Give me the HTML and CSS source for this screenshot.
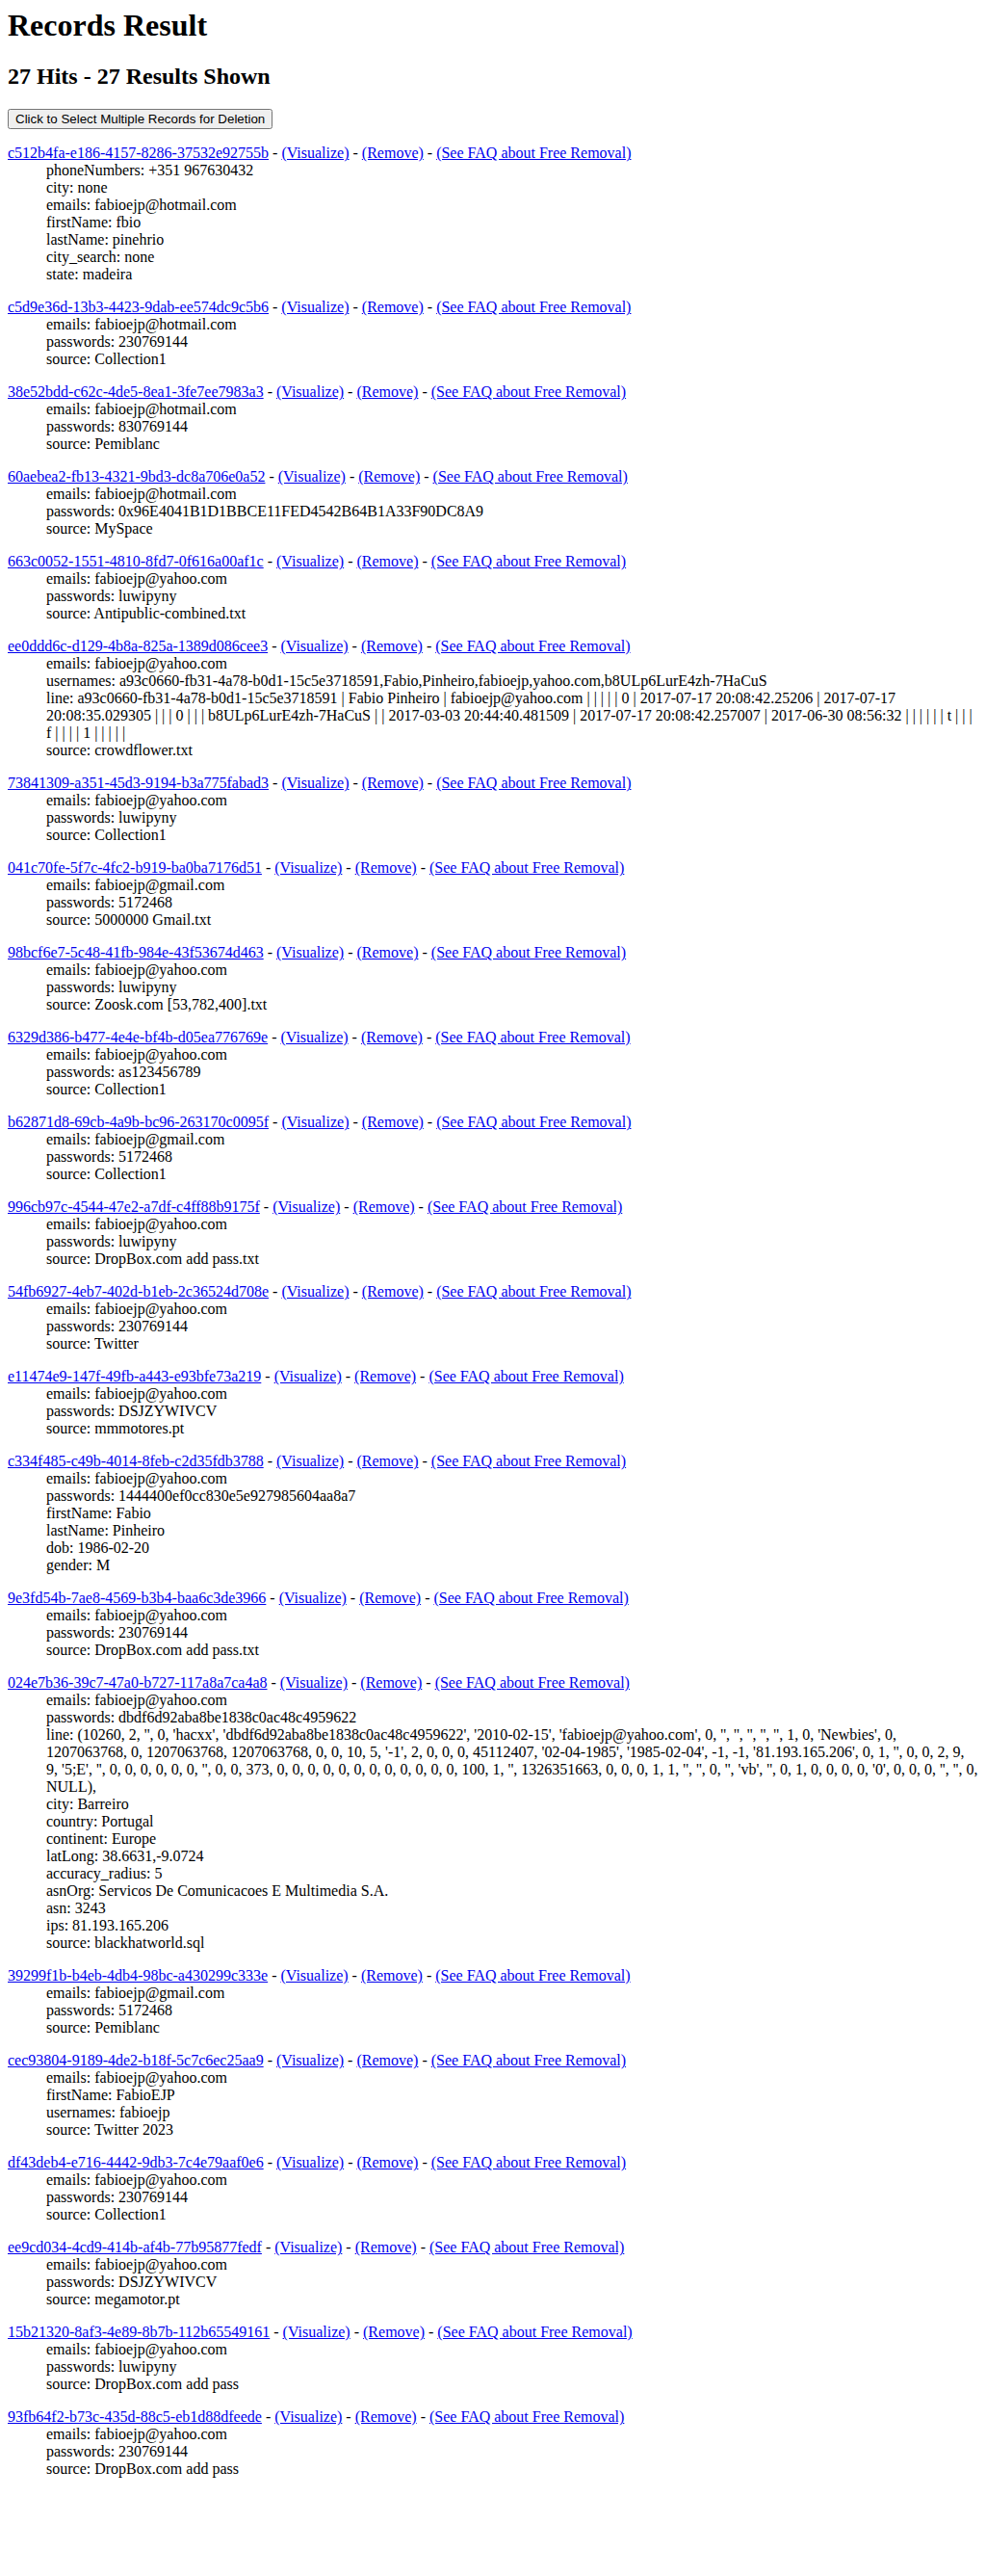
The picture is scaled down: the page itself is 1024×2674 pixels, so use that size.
FILE: index.html
```html
<!DOCTYPE html>
<html>
<head>
<meta charset="utf-8">
<title>Records Result</title>
<link rel="stylesheet" href="styles.css">
</head>
<body>
<h1 class="title">Records Result</h1>
<h2 class="hits">27 Hits - 27 Results Shown</h2>
<form class="select-form"><button type="button" class="select-btn">Click to Select Multiple Records for Deletion</button></form>

<dl class="record"><dt><a href="#">c512b4fa-e186-4157-8286-37532e92755b</a> - <a href="#">(Visualize)</a> - <a href="#">(Remove)</a> - <a href="#">(See FAQ about Free Removal)</a></dt>
<dd>phoneNumbers: +351 967630432</dd><dd>city: none</dd><dd>emails: fabioejp@hotmail.com</dd><dd>firstName: fbio</dd><dd>lastName: pinehrio</dd><dd>city_search: none</dd><dd>state: madeira</dd></dl>

<dl class="record"><dt><a href="#">c5d9e36d-13b3-4423-9dab-ee574dc9c5b6</a> - <a href="#">(Visualize)</a> - <a href="#">(Remove)</a> - <a href="#">(See FAQ about Free Removal)</a></dt>
<dd>emails: fabioejp@hotmail.com</dd><dd>passwords: 230769144</dd><dd>source: Collection1</dd></dl>

<dl class="record"><dt><a href="#">38e52bdd-c62c-4de5-8ea1-3fe7ee7983a3</a> - <a href="#">(Visualize)</a> - <a href="#">(Remove)</a> - <a href="#">(See FAQ about Free Removal)</a></dt>
<dd>emails: fabioejp@hotmail.com</dd><dd>passwords: 830769144</dd><dd>source: Pemiblanc</dd></dl>

<dl class="record"><dt><a href="#">60aebea2-fb13-4321-9bd3-dc8a706e0a52</a> - <a href="#">(Visualize)</a> - <a href="#">(Remove)</a> - <a href="#">(See FAQ about Free Removal)</a></dt>
<dd>emails: fabioejp@hotmail.com</dd><dd>passwords: 0x96E4041B1D1BBCE11FED4542B64B1A33F90DC8A9</dd><dd>source: MySpace</dd></dl>

<dl class="record"><dt><a href="#">663c0052-1551-4810-8fd7-0f616a00af1c</a> - <a href="#">(Visualize)</a> - <a href="#">(Remove)</a> - <a href="#">(See FAQ about Free Removal)</a></dt>
<dd>emails: fabioejp@yahoo.com</dd><dd>passwords: luwipyny</dd><dd>source: Antipublic-combined.txt</dd></dl>

<dl class="record"><dt><a href="#">ee0ddd6c-d129-4b8a-825a-1389d086cee3</a> - <a href="#">(Visualize)</a> - <a href="#">(Remove)</a> - <a href="#">(See FAQ about Free Removal)</a></dt>
<dd>emails: fabioejp@yahoo.com</dd><dd>usernames: a93c0660-fb31-4a78-b0d1-15c5e3718591,Fabio,Pinheiro,fabioejp,yahoo.com,b8ULp6LurE4zh-7HaCuS</dd><dd>line: a93c0660-fb31-4a78-b0d1-15c5e3718591 | Fabio Pinheiro | fabioejp@yahoo.com | | | | | 0 | 2017-07-17 20:08:42.25206 | 2017-07-17 20:08:35.029305 | | | 0 | | | b8ULp6LurE4zh-7HaCuS | | 2017-03-03 20:44:40.481509 | 2017-07-17 20:08:42.257007 | 2017-06-30 08:56:32 | | | | | | t | | | f | | | | 1 | | | | |</dd><dd>source: crowdflower.txt</dd></dl>

<dl class="record"><dt><a href="#">73841309-a351-45d3-9194-b3a775fabad3</a> - <a href="#">(Visualize)</a> - <a href="#">(Remove)</a> - <a href="#">(See FAQ about Free Removal)</a></dt>
<dd>emails: fabioejp@yahoo.com</dd><dd>passwords: luwipyny</dd><dd>source: Collection1</dd></dl>

<dl class="record"><dt><a href="#">041c70fe-5f7c-4fc2-b919-ba0ba7176d51</a> - <a href="#">(Visualize)</a> - <a href="#">(Remove)</a> - <a href="#">(See FAQ about Free Removal)</a></dt>
<dd>emails: fabioejp@gmail.com</dd><dd>passwords: 5172468</dd><dd>source: 5000000 Gmail.txt</dd></dl>

<dl class="record"><dt><a href="#">98bcf6e7-5c48-41fb-984e-43f53674d463</a> - <a href="#">(Visualize)</a> - <a href="#">(Remove)</a> - <a href="#">(See FAQ about Free Removal)</a></dt>
<dd>emails: fabioejp@yahoo.com</dd><dd>passwords: luwipyny</dd><dd>source: Zoosk.com [53,782,400].txt</dd></dl>

<dl class="record"><dt><a href="#">6329d386-b477-4e4e-bf4b-d05ea776769e</a> - <a href="#">(Visualize)</a> - <a href="#">(Remove)</a> - <a href="#">(See FAQ about Free Removal)</a></dt>
<dd>emails: fabioejp@yahoo.com</dd><dd>passwords: as123456789</dd><dd>source: Collection1</dd></dl>

<dl class="record"><dt><a href="#">b62871d8-69cb-4a9b-bc96-263170c0095f</a> - <a href="#">(Visualize)</a> - <a href="#">(Remove)</a> - <a href="#">(See FAQ about Free Removal)</a></dt>
<dd>emails: fabioejp@gmail.com</dd><dd>passwords: 5172468</dd><dd>source: Collection1</dd></dl>

<dl class="record"><dt><a href="#">996cb97c-4544-47e2-a7df-c4ff88b9175f</a> - <a href="#">(Visualize)</a> - <a href="#">(Remove)</a> - <a href="#">(See FAQ about Free Removal)</a></dt>
<dd>emails: fabioejp@yahoo.com</dd><dd>passwords: luwipyny</dd><dd>source: DropBox.com add pass.txt</dd></dl>

<dl class="record"><dt><a href="#">54fb6927-4eb7-402d-b1eb-2c36524d708e</a> - <a href="#">(Visualize)</a> - <a href="#">(Remove)</a> - <a href="#">(See FAQ about Free Removal)</a></dt>
<dd>emails: fabioejp@yahoo.com</dd><dd>passwords: 230769144</dd><dd>source: Twitter</dd></dl>

<dl class="record"><dt><a href="#">e11474e9-147f-49fb-a443-e93bfe73a219</a> - <a href="#">(Visualize)</a> - <a href="#">(Remove)</a> - <a href="#">(See FAQ about Free Removal)</a></dt>
<dd>emails: fabioejp@yahoo.com</dd><dd>passwords: DSJZYWIVCV</dd><dd>source: mmmotores.pt</dd></dl>

<dl class="record"><dt><a href="#">c334f485-c49b-4014-8feb-c2d35fdb3788</a> - <a href="#">(Visualize)</a> - <a href="#">(Remove)</a> - <a href="#">(See FAQ about Free Removal)</a></dt>
<dd>emails: fabioejp@yahoo.com</dd><dd>passwords: 1444400ef0cc830e5e927985604aa8a7</dd><dd>firstName: Fabio</dd><dd>lastName: Pinheiro</dd><dd>dob: 1986-02-20</dd><dd>gender: M</dd></dl>

<dl class="record"><dt><a href="#">9e3fd54b-7ae8-4569-b3b4-baa6c3de3966</a> - <a href="#">(Visualize)</a> - <a href="#">(Remove)</a> - <a href="#">(See FAQ about Free Removal)</a></dt>
<dd>emails: fabioejp@yahoo.com</dd><dd>passwords: 230769144</dd><dd>source: DropBox.com add pass.txt</dd></dl>

<dl class="record"><dt><a href="#">024e7b36-39c7-47a0-b727-117a8a7ca4a8</a> - <a href="#">(Visualize)</a> - <a href="#">(Remove)</a> - <a href="#">(See FAQ about Free Removal)</a></dt>
<dd>emails: fabioejp@yahoo.com</dd><dd>passwords: dbdf6d92aba8be1838c0ac48c4959622</dd><dd>line: (10260, 2, '', 0, 'hacxx', 'dbdf6d92aba8be1838c0ac48c4959622', '2010-02-15', 'fabioejp@yahoo.com', 0, '', '', '', '', '', 1, 0, 'Newbies', 0, 1207063768, 0, 1207063768, 1207063768, 0, 0, 10, 5, '-1', 2, 0, 0, 0, 45112407, '02-04-1985', '1985-02-04', -1, -1, '81.193.165.206', 0, 1, '', 0, 0, 2, 9, 9, '5;E', '', 0, 0, 0, 0, 0, 0, '', 0, 0, 373, 0, 0, 0, 0, 0, 0, 0, 0, 0, 0, 0, 0, 100, 1, '', 1326351663, 0, 0, 0, 1, 1, '', '', 0, '', 'vb', '', 0, 1, 0, 0, 0, 0, '0', 0, 0, 0, '', '', 0, NULL),</dd><dd>city: Barreiro</dd><dd>country: Portugal</dd><dd>continent: Europe</dd><dd>latLong: 38.6631,-9.0724</dd><dd>accuracy_radius: 5</dd><dd>asnOrg: Servicos De Comunicacoes E Multimedia S.A.</dd><dd>asn: 3243</dd><dd>ips: 81.193.165.206</dd><dd>source: blackhatworld.sql</dd></dl>

<dl class="record"><dt><a href="#">39299f1b-b4eb-4db4-98bc-a430299c333e</a> - <a href="#">(Visualize)</a> - <a href="#">(Remove)</a> - <a href="#">(See FAQ about Free Removal)</a></dt>
<dd>emails: fabioejp@gmail.com</dd><dd>passwords: 5172468</dd><dd>source: Pemiblanc</dd></dl>

<dl class="record"><dt><a href="#">cec93804-9189-4de2-b18f-5c7c6ec25aa9</a> - <a href="#">(Visualize)</a> - <a href="#">(Remove)</a> - <a href="#">(See FAQ about Free Removal)</a></dt>
<dd>emails: fabioejp@yahoo.com</dd><dd>firstName: FabioEJP</dd><dd>usernames: fabioejp</dd><dd>source: Twitter 2023</dd></dl>

<dl class="record"><dt><a href="#">df43deb4-e716-4442-9db3-7c4e79aaf0e6</a> - <a href="#">(Visualize)</a> - <a href="#">(Remove)</a> - <a href="#">(See FAQ about Free Removal)</a></dt>
<dd>emails: fabioejp@yahoo.com</dd><dd>passwords: 230769144</dd><dd>source: Collection1</dd></dl>

<dl class="record"><dt><a href="#">ee9cd034-4cd9-414b-af4b-77b95877fedf</a> - <a href="#">(Visualize)</a> - <a href="#">(Remove)</a> - <a href="#">(See FAQ about Free Removal)</a></dt>
<dd>emails: fabioejp@yahoo.com</dd><dd>passwords: DSJZYWIVCV</dd><dd>source: megamotor.pt</dd></dl>

<dl class="record"><dt><a href="#">15b21320-8af3-4e89-8b7b-112b65549161</a> - <a href="#">(Visualize)</a> - <a href="#">(Remove)</a> - <a href="#">(See FAQ about Free Removal)</a></dt>
<dd>emails: fabioejp@yahoo.com</dd><dd>passwords: luwipyny</dd><dd>source: DropBox.com add pass</dd></dl>

<dl class="record"><dt><a href="#">93fb64f2-b73c-435d-88c5-eb1d88dfeede</a> - <a href="#">(Visualize)</a> - <a href="#">(Remove)</a> - <a href="#">(See FAQ about Free Removal)</a></dt>
<dd>emails: fabioejp@yahoo.com</dd><dd>passwords: 230769144</dd><dd>source: DropBox.com add pass</dd></dl>
</body>
</html>
```

FILE: styles.css
```css
body {
  margin: 8px;
  font-family: "Liberation Serif", "Times New Roman", serif;
  font-size: 16px;
  color: #000;
  background: #fff;
}

.title {
  font-size: 32px;
  font-weight: bold;
  margin: 0 0 21.44px;
}

.hits {
  font-size: 24px;
  font-weight: bold;
  margin: 19.92px 0;
}

.select-form {
  margin: 0;
}

.select-btn {
  font-family: "Liberation Sans", Arial, sans-serif;
  font-size: 13.333px;
}

.record {
  margin: 16px 0;
}

.record dt {
  margin: 0;
}

.record dd {
  margin-left: 40px;
}

.record a {
  color: #0000ee;
  text-decoration: underline;
}
```
